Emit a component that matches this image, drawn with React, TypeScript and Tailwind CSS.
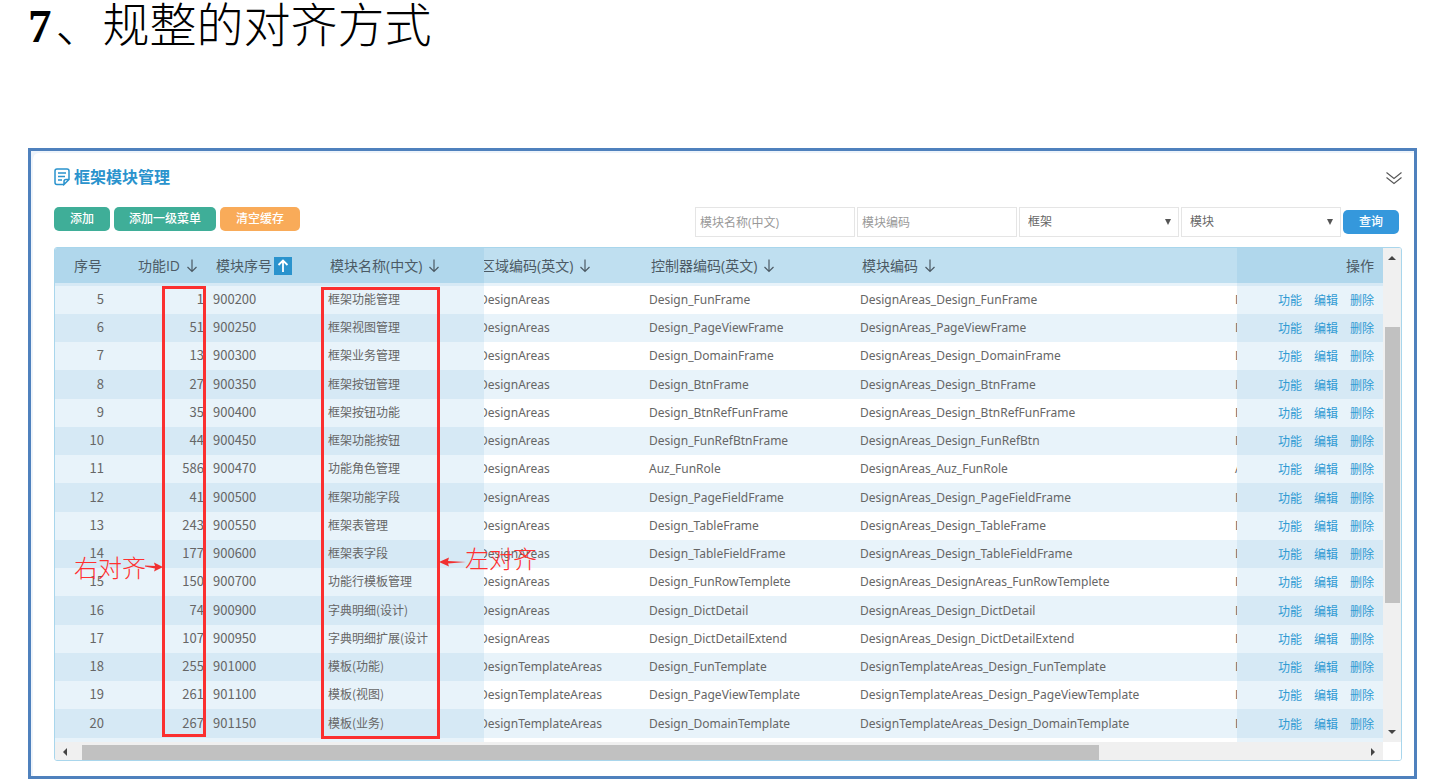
import React from 'react';

interface ModuleRow {
    no: number;
    id: number;
    order: string;
    name: string;
    area: string;
    controller: string;
    code: string;
    next: string;
}

const rows: ModuleRow[] = [
    { no: 5, id: 1, order: '900200', name: '框架功能管理', area: 'DesignAreas', controller: 'Design_FunFrame', code: 'DesignAreas_Design_FunFrame', next: 'D' },
    { no: 6, id: 51, order: '900250', name: '框架视图管理', area: 'DesignAreas', controller: 'Design_PageViewFrame', code: 'DesignAreas_PageViewFrame', next: 'D' },
    { no: 7, id: 13, order: '900300', name: '框架业务管理', area: 'DesignAreas', controller: 'Design_DomainFrame', code: 'DesignAreas_Design_DomainFrame', next: 'D' },
    { no: 8, id: 27, order: '900350', name: '框架按钮管理', area: 'DesignAreas', controller: 'Design_BtnFrame', code: 'DesignAreas_Design_BtnFrame', next: 'D' },
    { no: 9, id: 35, order: '900400', name: '框架按钮功能', area: 'DesignAreas', controller: 'Design_BtnRefFunFrame', code: 'DesignAreas_Design_BtnRefFunFrame', next: 'D' },
    { no: 10, id: 44, order: '900450', name: '框架功能按钮', area: 'DesignAreas', controller: 'Design_FunRefBtnFrame', code: 'DesignAreas_Design_FunRefBtn', next: 'D' },
    { no: 11, id: 586, order: '900470', name: '功能角色管理', area: 'DesignAreas', controller: 'Auz_FunRole', code: 'DesignAreas_Auz_FunRole', next: 'A' },
    { no: 12, id: 41, order: '900500', name: '框架功能字段', area: 'DesignAreas', controller: 'Design_PageFieldFrame', code: 'DesignAreas_Design_PageFieldFrame', next: 'D' },
    { no: 13, id: 243, order: '900550', name: '框架表管理', area: 'DesignAreas', controller: 'Design_TableFrame', code: 'DesignAreas_Design_TableFrame', next: 'D' },
    { no: 14, id: 177, order: '900600', name: '框架表字段', area: 'DesignAreas', controller: 'Design_TableFieldFrame', code: 'DesignAreas_Design_TableFieldFrame', next: 'D' },
    { no: 15, id: 150, order: '900700', name: '功能行模板管理', area: 'DesignAreas', controller: 'Design_FunRowTemplete', code: 'DesignAreas_DesignAreas_FunRowTemplete', next: 'D' },
    { no: 16, id: 74, order: '900900', name: '字典明细(设计)', area: 'DesignAreas', controller: 'Design_DictDetail', code: 'DesignAreas_Design_DictDetail', next: 'D' },
    { no: 17, id: 107, order: '900950', name: '字典明细扩展(设计', area: 'DesignAreas', controller: 'Design_DictDetailExtend', code: 'DesignAreas_Design_DictDetailExtend', next: 'D' },
    { no: 18, id: 255, order: '901000', name: '模板(功能)', area: 'DesignTemplateAreas', controller: 'Design_FunTemplate', code: 'DesignTemplateAreas_Design_FunTemplate', next: 'D' },
    { no: 19, id: 261, order: '901100', name: '模板(视图)', area: 'DesignTemplateAreas', controller: 'Design_PageViewTemplate', code: 'DesignTemplateAreas_Design_PageViewTemplate', next: 'D' },
    { no: 20, id: 267, order: '901150', name: '模板(业务)', area: 'DesignTemplateAreas', controller: 'Design_DomainTemplate', code: 'DesignTemplateAreas_Design_DomainTemplate', next: 'D' },
];

const SortArrow: React.FC<{ up?: boolean }> = ({ up }) => (
    <svg viewBox="0 0 12 14" className="h-3.5 w-3 shrink-0" fill="none" stroke="currentColor" strokeWidth={up ? 1.8 : 1.2}>
        {up ? <path d="M6 13V1.5M1.5 6L6 1.5L10.5 6" /> : <path d="M6 0.5V12.5M1.5 8L6 12.5L10.5 8" />}
    </svg>
);

// fixed = pinned columns on the left and right, scroll = columns that slide under them
const fixedHead = 'border-b-3 border-[#d6e9f5] bg-[#b0d7ec] p-0 font-normal';
const scrollHead = 'border-b-3 border-[#e8f3fa] bg-[#bfdff0] p-0 font-normal';
const fixedCell = 'bg-[#e8f3fa] p-0 pb-0.5 group-even:bg-[#d6e9f5]';
const scrollCell = "bg-white p-0 font-['Noto_Sans',sans-serif] text-xs leading-5 group-even:bg-[#e8f3fa]";

const HeadLabel: React.FC<{ text: string }> = ({ text }) => (
    <span className="flex items-center gap-1.5 whitespace-nowrap pl-[7px]">
        {text}
        <SortArrow />
    </span>
);

const ModuleTable: React.FC = () => (
    <table className="w-full table-fixed border-separate border-spacing-0 font-['Noto_Sans_CJK_SC',sans-serif] text-[13px] leading-5 text-[#666]">
        <colgroup>
            <col className="w-14" />
            <col className="w-[97px]" />
            <col className="w-[115px]" />
            <col className="w-[161px]" />
            <col className="w-40" />
            <col className="w-[211px]" />
            <col />
            <col className="w-2" />
            <col className="w-[146px]" />
        </colgroup>
        <thead className="text-left font-['Open_Sans','Noto_Sans_CJK_SC',sans-serif] text-sm text-[#4c5a64]">
            <tr className="h-[38px]">
                <th className={`${fixedHead} pr-[9px] text-right`}>序号</th>
                <th className={fixedHead}>
                    <span className="flex items-center justify-end gap-1.5 pr-2.5">
                        功能ID
                        <SortArrow />
                    </span>
                </th>
                <th className={fixedHead}>
                    <span className="flex items-center gap-0.5 whitespace-nowrap pl-2">
                        模块序号
                        <span className="flex size-[18px] items-center justify-center bg-[#2a93cd] text-white">
                            <SortArrow up />
                        </span>
                    </span>
                </th>
                <th className={fixedHead}><HeadLabel text="模块名称(中文)" /></th>
                <th className={`${scrollHead} overflow-hidden`}>
                    <span className="-ml-2.5 block"><HeadLabel text="区域编码(英文)" /></span>
                </th>
                <th className={scrollHead}><HeadLabel text="控制器编码(英文)" /></th>
                <th className={scrollHead}><HeadLabel text="模块编码" /></th>
                <th className={scrollHead}></th>
                <th className={`${fixedHead} pr-[9px] text-right`}>操作</th>
            </tr>
        </thead>
        <tbody>
            {rows.map((row) => (
                <tr key={row.no} className="group h-7 nth-[4n]:h-[29px]">
                    <td className={`${fixedCell} pr-[7px] text-right`}>{row.no}</td>
                    <td className={`${fixedCell} pr-1 text-right`}>{row.id}</td>
                    <td className={`${fixedCell} pl-[5px]`}>{row.order}</td>
                    <td className={`${fixedCell} pl-[5px] text-xs`}>{row.name}</td>
                    <td className={`${scrollCell} overflow-hidden`}><span className="-ml-[5px]">{row.area}</span></td>
                    <td className={`${scrollCell} pl-[5px]`}>{row.controller}</td>
                    <td className={`${scrollCell} pl-[5px]`}>{row.code}</td>
                    <td className={`${scrollCell} overflow-hidden pl-1.5`}>{row.next}</td>
                    <td className={`${fixedCell} pr-[9px] pt-0.5`}>
                        <span className="flex justify-end gap-3 text-xs leading-5 text-[#2f9ad3]">
                            <a href="#fun">功能</a>
                            <a href="#edit">编辑</a>
                            <a href="#delete">删除</a>
                        </span>
                    </td>
                </tr>
            ))}
            <tr className="h-1" aria-hidden="true">
                <td colSpan={4} className="bg-[#e8f3fa] p-0"></td>
                <td colSpan={4} className="bg-white p-0"></td>
                <td className="bg-[#e8f3fa] p-0"></td>
            </tr>
        </tbody>
    </table>
);

const FilterSelect: React.FC<{ label: string; value: string }> = ({ label, value }) => (
    <span className="relative flex">
        <select aria-label={label} className="h-[30px] w-40 appearance-none rounded-none border border-[#e5e5e5] bg-white pl-2 text-xs text-[#666]">
            <option>{value}</option>
        </select>
        <svg viewBox="0 0 8 8" className="pointer-events-none absolute right-2 top-3 size-1.5" fill="#555">
            <path d="M0 0H8L4 8Z" />
        </svg>
    </span>
);

const Annotations: React.FC = () => (
    <div className="pointer-events-none absolute inset-0 text-2xl font-light leading-6 text-[#ff3030]">
        <div className="absolute left-[107px] top-[38px] h-[451px] w-11 border-3 border-[#fb2f2f]"></div>
        <div className="absolute left-[266px] top-[39px] h-[452px] w-[119px] border-3 border-[#fb2f2f]"></div>
        <span className="absolute left-[19px] top-[308px] whitespace-nowrap">右对齐</span>
        <svg viewBox="0 0 18 10" className="absolute left-[90px] top-[314px] h-2.5 w-[18px]" fill="#f03030">
            <path d="M0 3.5L10 4L9 0.5L18 5L9 9.5L10 6.5L0 4.5Z" />
        </svg>
        <span className="absolute left-[410px] top-[299px] whitespace-nowrap">左对齐</span>
        <svg viewBox="0 0 28 10" className="absolute left-[384px] top-[309px] h-2.5 w-7" fill="#f03030">
            <path d="M0 5L10 0.5L9 4L27 5L9 6.5L10 9.5Z" />
        </svg>
    </div>
);

const App: React.FC = () => (
    <div className="bg-white font-['Open_Sans','Noto_Sans_CJK_SC',sans-serif]">
        <h1 className="flex h-[148px] gap-1 whitespace-nowrap pl-7 font-['Liberation_Serif','Noto_Sans_CJK_SC',serif] text-[47px] font-light leading-[52px] text-black">
            <b className="font-bold">7</b>
            <span>、规整的对齐方式</span>
        </h1>

        <main className="ml-7 mr-4 border-3 border-[#4f81bd] bg-[#eef4fb]">
            <section className="ml-0.5 mt-0.5 rounded-tl-md bg-white pb-[15px] pl-[21px] pr-3 pt-3">
                <div className="flex h-6 items-center">
                    <svg viewBox="0 0 16 18" className="h-[18px] w-4" fill="none" stroke="#2a93cd" strokeWidth="1.5">
                        <path d="M10 16.5H3Q1 16.5 1 14.5V3Q1 1 3 1H13Q15 1 15 3V11.5L10 16.5V13.5Q10 11.5 12 11.5H15" />
                        <path d="M4 5H12M4 8.5H11M4 12H8" strokeWidth="1.3" />
                    </svg>
                    <h2 className="ml-1 text-base font-bold leading-6 text-[#2a93cd]">框架模块管理</h2>
                    <button type="button" aria-label="展开" className="ml-auto pt-0.5">
                        <svg viewBox="0 0 16 14" className="h-3.5 w-4" fill="none" stroke="#555" strokeWidth="1.1">
                            <path d="M0.5 1.5L8 7.5L15.5 1.5M0.5 6.5L8 12.5L15.5 6.5" />
                        </svg>
                    </button>
                </div>

                <div className="mb-2.5 mt-[18px] flex items-start justify-between pr-[3px]">
                    <div className="flex gap-1 text-xs font-medium text-white">
                        <button type="button" className="h-6 rounded-[5px] bg-[#3fae98] px-4">添加</button>
                        <button type="button" className="h-6 rounded-[5px] bg-[#3fae98] px-[15px]">添加一级菜单</button>
                        <button type="button" className="h-6 rounded-[5px] bg-[#f9ab59] px-4">清空缓存</button>
                    </div>
                    <form className="flex items-center gap-0.5 text-xs">
                        <input type="text" aria-label="模块名称(中文)" placeholder="模块名称(中文)" className="h-[30px] w-40 border border-[#e5e5e5] pl-1 placeholder:text-[#999]" />
                        <input type="text" aria-label="模块编码" placeholder="模块编码" className="h-[30px] w-40 border border-[#e5e5e5] pl-1 placeholder:text-[#999]" />
                        <FilterSelect label="框架" value="框架" />
                        <FilterSelect label="模块" value="模块" />
                        <button type="button" className="h-6 rounded-[5px] bg-[#3598dc] px-4 font-medium text-white">查询</button>
                    </form>
                </div>

                <div className="relative overflow-hidden rounded-[3px] border border-[#a9d6ec]">
                    <div className="flex">
                        <div className="min-w-0 flex-1">
                            <ModuleTable />
                        </div>
                        <div className="flex w-[18px] flex-col items-center bg-[#f0f0f0]">
                            <svg viewBox="0 0 8 4" className="mt-2 h-1 w-2" fill="#444"><path d="M0 4L4 0L8 4Z" /></svg>
                            <div className="mt-[67px] h-[276px] w-[15px] bg-[#c1c1c1]"></div>
                            <svg viewBox="0 0 8 4" className="mb-2 mt-auto h-1 w-2" fill="#444"><path d="M0 0L4 4L8 0Z" /></svg>
                        </div>
                    </div>
                    <div className="flex">
                        <div className="flex h-[18px] flex-1 items-center bg-[#f0f0f0] px-2 pt-0.5">
                            <svg viewBox="0 0 4 8" className="h-2 w-1" fill="#444"><path d="M4 0L0 4L4 8Z" /></svg>
                            <div className="ml-[15px] h-[15px] flex-[1017] bg-[#c1c1c1]"></div>
                            <div className="flex-[272]"></div>
                            <svg viewBox="0 0 4 8" className="h-2 w-1" fill="#444"><path d="M0 0L4 4L0 8Z" /></svg>
                        </div>
                        <div className="w-[18px] bg-white"></div>
                    </div>
                    <Annotations />
                </div>
            </section>
        </main>
    </div>
);

export default App;
